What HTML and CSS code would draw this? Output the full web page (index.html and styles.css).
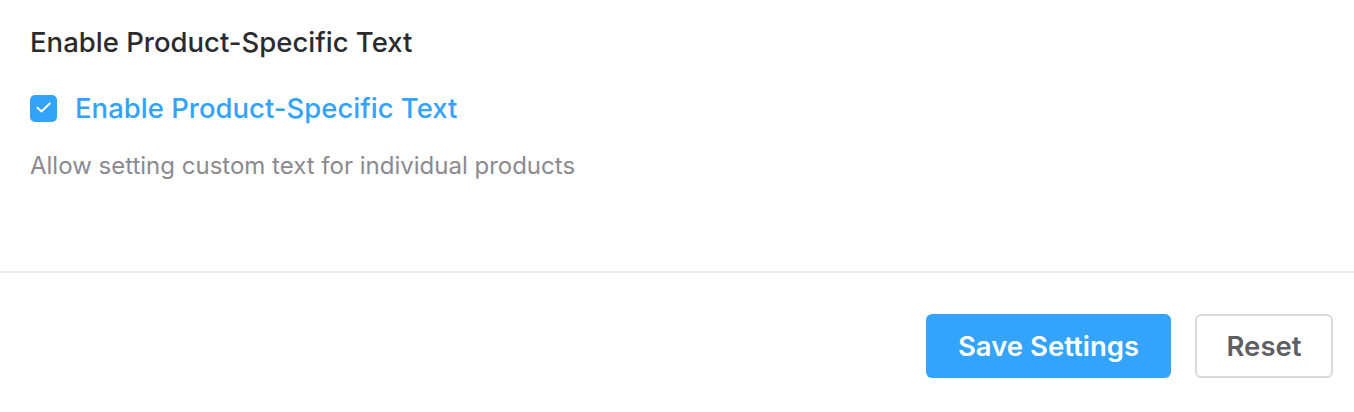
FILE: index.html
```html
<!DOCTYPE HTML>
<html>
<head>
<meta charset="UTF-8">
<title>Settings</title>
<link rel="stylesheet" href="styles.css">
</head>
<body>

<div class="panel">
	<div class="panel-body">
		<h2 class="section-title">Enable Product-Specific Text</h2>
		<label class="check-row">
			<span class="check-box">
				<svg width="27" height="27" viewBox="0 0 27 27"><path d="M7.5 12.8 L11.5 16.5 L19.8 8.5" fill="none" stroke="#fff" stroke-width="2" stroke-linecap="round" stroke-linejoin="round"/></svg>
			</span>
			<span class="check-label">Enable Product-Specific Text</span>
		</label>
		<p class="help-text">Allow setting custom text for individual products</p>
	</div>
	<div class="panel-footer">
		<button class="btn btn-primary">Save Settings</button>
		<button class="btn btn-default">Reset</button>
	</div>
</div>

</body>
</html>
```

FILE: styles.css
```css
/* *** Base *** */
body {
	margin: 0;
	background: #fff;
	font-family: Inter, "Noto Sans", sans-serif;
}

/* *** Panel *** */
.panel-body {
	padding: 26px 30px 0;
	height: 271px;
	box-sizing: border-box;
}

.section-title {
	margin: 0;
	font-size: 27.5px;
	font-weight: 500;
	line-height: 32px;
	color: #2b2b2e;
}

.check-row {
	display: flex;
	align-items: center;
	gap: 18px;
	margin-top: 34px;
	height: 32px;
	cursor: pointer;
}

.check-box {
	width: 27px;
	height: 27px;
	border-radius: 5px;
	background: #33a3fa;
	display: flex;
}

.check-label {
	font-size: 27.5px;
	font-weight: 500;
	line-height: 32px;
	color: #33a3fa;
}

.help-text {
	margin: 26px 0 0;
	font-size: 24px;
	line-height: 32px;
	color: #8a8a8f;
}

/* *** Footer *** */
.panel-footer {
	border-top: 2px solid #eceef2;
	display: flex;
	justify-content: flex-end;
	gap: 24px;
	padding: 41px 21px 0 0;
}

.btn {
	font-family: inherit;
	height: 64px;
	border-radius: 6px;
	font-size: 27.5px;
	font-weight: 600;
	cursor: pointer;
}

.btn-primary {
	width: 245px;
	background: #33a3fc;
	border: none;
	color: #fff;
}

.btn-default {
	width: 138px;
	background: #fff;
	border: 2px solid #d9d9de;
	color: #5f5f63;
}
```
